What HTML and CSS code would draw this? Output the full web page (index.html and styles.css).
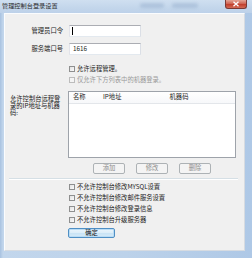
FILE: index.html
```html
<!DOCTYPE html>
<html lang="zh-CN">
<head>
<meta charset="utf-8">
<title>管理控制台登录设置</title>
<link rel="stylesheet" href="styles.css">
</head>
<body>
<div class="window">
  <div class="titlebar">
    <span class="title">管理控制台登录设置</span>
    <span class="blur b1"></span>
    <span class="blur b2"></span>
    <span class="close"><svg width="8" height="6" viewBox="0 0 8 6"><path d="M1.5 0.8 L6.5 5.2 M6.5 0.8 L1.5 5.2" stroke="#fff" stroke-width="1.3" fill="none"/></svg></span>
  </div>
  <div class="frame">
    <div class="client">
      <div class="row r1">
        <div class="lbl right">管理员口令</div>
        <div class="input"><span class="caret"></span></div>
      </div>
      <div class="row r2">
        <div class="lbl right">服务端口号</div>
        <div class="input"><span class="val">1616</span></div>
      </div>
      <div class="row r3">
        <div class="lbl"></div>
        <div class="check"><span class="box"></span><span class="ctext">允许远程管理。</span></div>
      </div>
      <div class="row r4">
        <div class="lbl"></div>
        <div class="check disabled"><span class="box"></span><span class="ctext">仅允许下方列表中的机器登录。</span></div>
      </div>
      <div class="row r5">
        <div class="lbl multi">允许控制台远程登录的IP地址与机器码:</div>
        <div class="list">
          <div class="lhead">
            <span class="col c1">名称</span>
            <span class="col c2">IP地址</span>
            <span class="col c3">机器码</span>
          </div>
        </div>
      </div>
      <div class="row r6">
        <div class="lbl"></div>
        <div class="btns">
          <span class="btn dis">添加</span>
          <span class="btn dis">修改</span>
          <span class="btn dis">删除</span>
        </div>
      </div>
      <div class="sep"></div>
      <div class="row rc">
        <div class="lbl"></div>
        <div class="check"><span class="box"></span><span class="ctext">不允许控制台修改MYSQL设置</span></div>
      </div>
      <div class="row rc">
        <div class="lbl"></div>
        <div class="check"><span class="box"></span><span class="ctext">不允许控制台修改邮件服务设置</span></div>
      </div>
      <div class="row rc">
        <div class="lbl"></div>
        <div class="check"><span class="box"></span><span class="ctext">不允许控制台修改登录信息</span></div>
      </div>
      <div class="row rc">
        <div class="lbl"></div>
        <div class="check"><span class="box"></span><span class="ctext">不允许控制台升级服务器</span></div>
      </div>
      <div class="row r9">
        <div class="lbl"></div>
        <span class="btn ok">确定</span>
      </div>
    </div>
  </div>
</div>
</body>
</html>
```
FILE: styles.css
```css
html, body {
  margin: 0;
  padding: 0;
  background: #b9cfe8;
}
body {
  width: 252px;
  height: 258px;
  overflow: hidden;
  font-family: "Noto Sans CJK SC", "Noto Sans", sans-serif;
  font-size: 6.3px;
  line-height: 1;
  color: #1c1c1c;
}
.window {
  width: 252px;
  height: 258px;
  display: flex;
  flex-direction: column;
  background: linear-gradient(to right, #a8c2e0 0px, #c2d6ec 3px, #bcd2ea 50%, #aec8e6 100%);
}
.titlebar {
  height: 13px;
  flex: none;
  display: flex;
  align-items: flex-start;
  position: relative;
  background: linear-gradient(to bottom, #cfdff0 0%, #c3d6eb 60%, #bdd1e9 100%);
}
.title {
  padding: 3px 0 0 2px;
  color: #2a2a2a;
  font-size: 6.2px;
}
.blur {
  position: absolute;
  top: 3px;
  height: 5px;
  border-radius: 3px;
  background: rgba(120, 150, 185, 0.3);
  filter: blur(1.5px);
}
.b1 { left: 140px; width: 24px; }
.b2 { left: 172px; width: 26px; }
.close {
  margin-left: auto;
  margin-right: 5px;
  width: 22px;
  height: 9px;
  box-sizing: border-box;
  border: 1px solid #7a3a35;
  border-top: none;
  border-radius: 0 0 3px 3px;
  background: linear-gradient(to bottom, #e4a495 0%, #cf6554 45%, #c2402d 55%, #d26a55 100%);
  display: flex;
  align-items: center;
  justify-content: center;
}
.close svg { display: block; }
.frame {
  flex: 1;
  display: flex;
  padding: 0 7px 7px 4px;
}
.client {
  flex: 1;
  background: #f0f0f0;
  border: 1px solid;
  border-color: #fafcfe #d6dbe1 #d6dbe1 #fafcfe;
  padding-top: 11px;
  display: flex;
  flex-direction: column;
}
.row {
  display: flex;
  align-items: center;
}
.lbl {
  width: 63px;
  flex: none;
  box-sizing: border-box;
}
.lbl.right {
  text-align: right;
  padding-right: 5px;
}
.lbl.multi {
  align-self: flex-start;
  padding: 4px 4px 0 5px;
  line-height: 7px;
  word-break: break-all;
}
.input {
  margin-left: 1px;
  width: 72px;
  height: 12px;
  box-sizing: border-box;
  background: #fff;
  border: 1px solid;
  border-color: #abadb3 #dbdfe6 #e3e9ef #e2e3ea;
  display: flex;
  align-items: center;
  padding-left: 2px;
}
.caret {
  width: 1px;
  height: 8px;
  background: #000;
}
.val { padding-left: 1px; color: #222; }
.r1 { height: 12px; }
.r2 { height: 12px; margin-top: 6px; }
.r3 { height: 7px; margin-top: 11px; }
.r4 { height: 7px; margin-top: 4px; }
.r5 { margin-top: 7px; align-items: flex-start; }
.r6 { margin-top: 5px; height: 11px; }
.rc { height: 7px; margin-top: 4px; }
.r9 { margin-top: 4px; }
.check {
  display: flex;
  align-items: center;
  margin-left: 1px;
}
.box {
  width: 6px;
  height: 6px;
  box-sizing: border-box;
  border: 1px solid #8e8f8f;
  background: linear-gradient(135deg, #e2e2e2, #fafafa);
  margin-right: 2px;
}
.disabled .box { border-color: #bcbcbc; background: #f4f4f4; }
.disabled .ctext { color: #9a9a9a; }
.list {
  width: 168px;
  height: 67px;
  box-sizing: border-box;
  background: #fff;
  border: 1px solid #9ea3aa;
}
.lhead {
  height: 12px;
  box-sizing: border-box;
  display: flex;
  align-items: center;
  border-bottom: 1px solid #e3e6ea;
  background: linear-gradient(to bottom, #ffffff, #f7f8fa);
}
.col { box-sizing: border-box; }
.c1 { width: 30px; padding-left: 4px; }
.c2 { width: 58px; padding-left: 4px; }
.c3 { width: 44px; text-align: center; }
.btns {
  display: flex;
  gap: 11px;
  margin-left: 25px;
}
.btn {
  height: 11px;
  width: 32px;
  box-sizing: border-box;
  display: flex;
  align-items: center;
  justify-content: center;
  border: 1px solid #adb2b5;
  border-radius: 2px;
  background: #f4f4f4;
}
.btn.dis { color: #8d8d8d; }
.sep {
  margin: 4px 6px 0 4px;
  height: 1px;
  border-bottom: 1px solid #ffffff;
  background: #d5dfe5;
}
.btn.ok {
  width: 47px;
  height: 10px;
  margin-left: 0;
  border-color: #4f8fc4;
  background: linear-gradient(to bottom, #eaf5fc 0%, #dcedf8 50%, #c8e3f5 51%, #d6ebf8 100%);
  box-shadow: inset 0 0 0 1px #b9dcf5;
  color: #111;
}
```
